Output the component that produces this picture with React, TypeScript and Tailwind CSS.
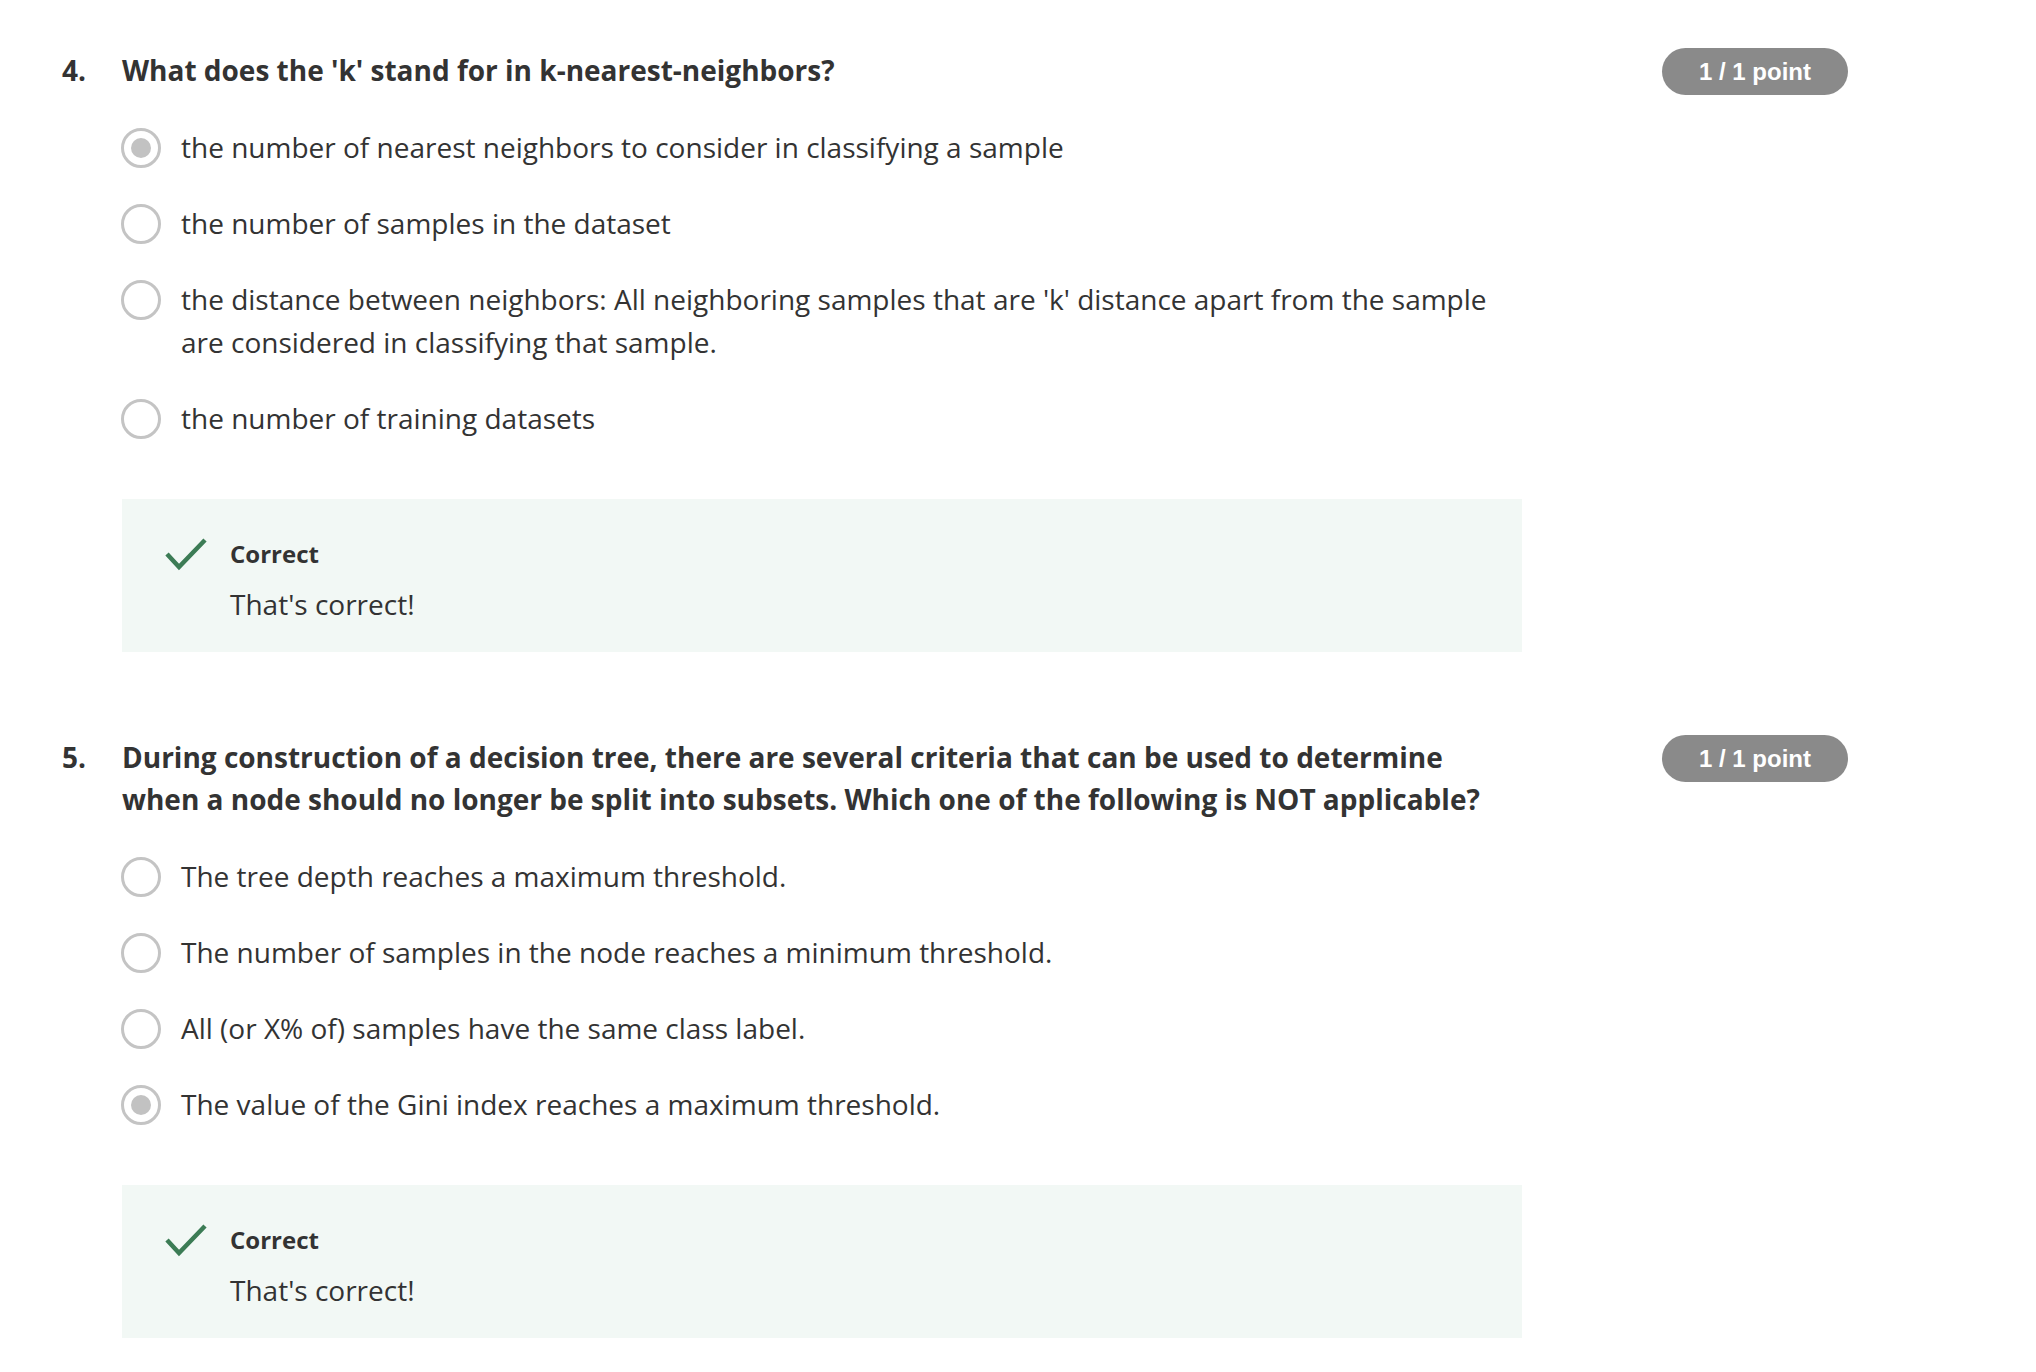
import React from "react";

type Q = {
  num: string;
  title: React.ReactNode;
  options: { text: React.ReactNode; selected?: boolean }[];
};

const questions: Q[] = [
  {
    num: "4.",
    title: "What does the 'k' stand for in k-nearest-neighbors?",
    options: [
      { text: "the number of nearest neighbors to consider in classifying a sample", selected: true },
      { text: "the number of samples in the dataset" },
      {
        text: (
          <>
            the distance between neighbors: All neighboring samples that are 'k' distance apart from the sample
            <br />
            are considered in classifying that sample.
          </>
        ),
      },
      { text: "the number of training datasets" },
    ],
  },
  {
    num: "5.",
    title: (
      <>
        During construction of a decision tree, there are several criteria that can be used to determine
        <br />
        when a node should no longer be split into subsets. Which one of the following is NOT applicable?
      </>
    ),
    options: [
      { text: "The tree depth reaches a maximum threshold." },
      { text: "The number of samples in the node reaches a minimum threshold." },
      { text: "All (or X% of) samples have the same class label." },
      { text: "The value of the Gini index reaches a maximum threshold.", selected: true },
    ],
  },
];

function Radio({ selected }: { selected?: boolean }) {
  return (
    <div className="ml-[-1px] mt-[1.5px] flex h-[40px] w-[40px] shrink-0 items-center justify-center rounded-full border-[3.5px] border-[#c4c4c4] bg-white">
      {selected && <div className="h-[20px] w-[20px] rounded-full bg-[#c2c2c2]" />}
    </div>
  );
}

function Check() {
  return (
    <svg width="42" height="34" viewBox="0 0 42 34" className="shrink-0">
      <polyline points="2,17 14,30 40,3" fill="none" stroke="#3c7c55" strokeWidth="4.5" />
    </svg>
  );
}

function Question({ q, first }: { q: Q; first?: boolean }) {
  return (
    <div className={`flex ${first ? "" : "mt-[84px]"}`}>
      <div className="w-[60px] shrink-0 text-[28px] font-bold leading-[42px] text-[#333]">{q.num}</div>
      <div className="w-[1400px] shrink-0">
        <div className="text-[28px] font-bold leading-[42px] text-[#333]">{q.title}</div>
        <div className="mt-[35px] flex flex-col gap-[33px]">
          {q.options.map((o, i) => (
            <div key={i} className="flex items-start gap-[20px]">
              <Radio selected={o.selected} />
              <div className="text-[28px] leading-[43px] text-[#333]">{o.text}</div>
            </div>
          ))}
        </div>
        <div className="mt-[59px] h-[153px] bg-[#f2f8f5] pl-[43px] pt-[38px]">
          <div className="flex items-center gap-[23px]">
            <Check />
            <div className="text-[24px] font-bold leading-[32px] text-[#333]">Correct</div>
          </div>
          <div className="mt-[15px] pl-[65px] text-[28px] leading-[36px] text-[#333]">That's correct!</div>
        </div>
      </div>
      <div className="ml-[140px] mt-[-1px] shrink-0">
        <div
          className="flex h-[47px] w-[186px] items-center justify-center rounded-full bg-[#8a8a8a] text-[24px] font-bold text-white"
          style={{ fontFamily: '"Liberation Sans", Arial, sans-serif' }}
        >
          1 / 1 point
        </div>
      </div>
    </div>
  );
}

export default function App() {
  return (
    <div
      className="min-h-[1372px] w-[2036px] bg-white pl-[62px] pt-[49px]"
      style={{ fontFamily: '"Open Sans", "Noto Sans", sans-serif' }}
    >
      {questions.map((q, i) => (
        <Question key={i} q={q} first={i === 0} />
      ))}
    </div>
  );
}
